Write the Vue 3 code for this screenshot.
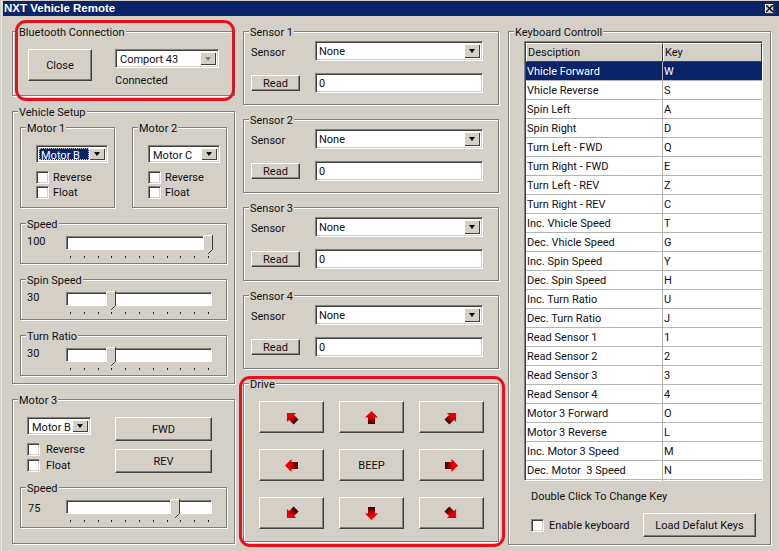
<script setup>
const motors = [
  { title: 'Motor 1', value: 'Motor B', focused: true },
  { title: 'Motor 2', value: 'Motor C', focused: false },
]
const sliders = [
  { title: 'Speed', value: 100 },
  { title: 'Spin Speed', value: 30 },
  { title: 'Turn Ratio', value: 30 },
]
const sensors = ['Sensor 1', 'Sensor 2', 'Sensor 3', 'Sensor 4']
const ticks = Array.from({ length: 11 }, (_, i) => i)
const drive = [
  { angle: -45 }, { angle: 0 }, { angle: 45 },
  { angle: -90 }, { label: 'BEEP' }, { angle: 90 },
  { angle: -135 }, { angle: 180 }, { angle: 135 },
]
const keys = [
  ['Vhicle Forward', 'W'], ['Vhicle Reverse', 'S'], ['Spin Left', 'A'], ['Spin Right', 'D'],
  ['Turn Left - FWD', 'Q'], ['Turn Right - FWD', 'E'], ['Turn Left - REV', 'Z'], ['Turn Right - REV', 'C'],
  ['Inc. Vhicle Speed', 'T'], ['Dec. Vhicle Speed', 'G'], ['Inc. Spin Speed', 'Y'], ['Dec. Spin Speed', 'H'],
  ['Inc. Turn Ratio', 'U'], ['Dec. Turn Ratio', 'J'], ['Read Sensor 1', '1'], ['Read Sensor 2', '2'],
  ['Read Sensor 3', '3'], ['Read Sensor 4', '4'], ['Motor 3 Forward', 'O'], ['Motor 3 Reverse', 'L'],
  ['Inc. Motor 3 Speed', 'M'], ['Dec. Motor  3 Speed', 'N'],
]
const thumbLeft = (v) => `${Math.round(v * 1.38 - 1)}px`
</script>

<template>
  <div class="window">
    <header class="titlebar">
      <span>NXT Vehicle Remote</span>
      <span class="close-box">
        <svg width="7" height="7" viewBox="0 0 7 7"><path d="M0 0L7 7M7 0L0 7" stroke="#000" stroke-width="1.3" /></svg>
      </span>
    </header>

    <main class="content">
      <section class="col col-left">
        <div class="group bt">
          <span class="legend">Bluetooth Connection</span>
          <button class="btn close-btn">Close</button>
          <div class="bt-right">
            <div class="combo combo-port">
              <span class="combo-text">Comport 43</span>
              <span class="combo-arrow disabled"><i></i></span>
            </div>
            <span class="status">Connected</span>
          </div>
        </div>

        <div class="group setup">
          <span class="legend">Vehicle Setup</span>
          <div class="motors">
            <div v-for="m in motors" :key="m.title" class="group motor">
              <span class="legend">{{ m.title }}</span>
              <div class="combo combo-motor">
                <span class="combo-text" :class="{ selected: m.focused }">{{ m.value }}</span>
                <span class="combo-arrow"><i></i></span>
              </div>
              <label class="check"><span class="box"></span>Reverse</label>
              <label class="check"><span class="box"></span>Float</label>
            </div>
          </div>
          <div v-for="s in sliders" :key="s.title" class="group slider-group">
            <span class="legend">{{ s.title }}</span>
            <span class="slider-value">{{ s.value }}</span>
            <div class="slider">
              <div class="track"></div>
              <svg class="thumb" :style="{ left: thumbLeft(s.value) }" width="10" height="20" viewBox="0 0 10 20">
                <path d="M.5 .5H9.5V14.5L5 19L.5 14.5Z" fill="#d4d0c8" />
                <path d="M.5 14.5V.5H9" fill="none" stroke="#fff" />
                <path d="M9.5 0V14.5L5 19" fill="none" stroke="#404040" />
              </svg>
              <div class="ticks"><i v-for="t in ticks" :key="t"></i></div>
            </div>
          </div>
        </div>

        <div class="group motor3">
          <span class="legend">Motor 3</span>
          <div class="motor3-top">
            <div class="motor3-left">
              <div class="combo combo-m3">
                <span class="combo-text">Motor B</span>
                <span class="combo-arrow"><i></i></span>
              </div>
              <label class="check m3-check first"><span class="box"></span>Reverse</label>
              <label class="check m3-check"><span class="box"></span>Float</label>
            </div>
            <div class="motor3-buttons">
              <button class="btn">FWD</button>
              <button class="btn">REV</button>
            </div>
          </div>
          <div class="group slider-group m3-slider">
            <span class="legend">Speed</span>
            <span class="slider-value">75</span>
            <div class="slider">
              <div class="track"></div>
              <svg class="thumb" :style="{ left: thumbLeft(76) }" width="10" height="20" viewBox="0 0 10 20">
                <path d="M.5 .5H9.5V14.5L5 19L.5 14.5Z" fill="#d4d0c8" />
                <path d="M.5 14.5V.5H9" fill="none" stroke="#fff" />
                <path d="M9.5 0V14.5L5 19" fill="none" stroke="#404040" />
              </svg>
              <div class="ticks"><i v-for="t in ticks" :key="t"></i></div>
            </div>
          </div>
        </div>
      </section>

      <section class="col col-mid">
        <div v-for="s in sensors" :key="s" class="group sensor">
          <span class="legend">{{ s }}</span>
          <span class="sensor-label">Sensor</span>
          <div class="combo combo-sensor">
            <span class="combo-text">None</span>
            <span class="combo-arrow"><i></i></span>
          </div>
          <button class="btn read-btn">Read</button>
          <div class="textbox">0</div>
        </div>

        <div class="group drive">
          <span class="legend">Drive</span>
          <button v-for="(d, i) in drive" :key="i" class="btn drive-btn">
            <template v-if="d.label">{{ d.label }}</template>
            <svg v-else width="15" height="15" viewBox="0 0 15 15" :style="{ transform: `rotate(${d.angle}deg)` }">
              <defs>
                <linearGradient :id="`grad${i}`" x1="0" y1="0" x2="0" y2="1">
                  <stop offset="0" stop-color="#ff0000" />
                  <stop offset=".5" stop-color="#d40000" />
                  <stop offset="1" stop-color="#3a0000" />
                </linearGradient>
              </defs>
              <path d="M7.5 1L14 7.5H11V14H4V7.5H1Z" :fill="`url(#grad${i})`" />
            </svg>
          </button>
        </div>
      </section>

      <section class="col col-right">
        <div class="group keyboard">
          <span class="legend">Keyboard Controll</span>
          <div class="table">
            <div class="thead">
              <span class="th">Desciption</span>
              <span class="th">Key</span>
            </div>
            <div v-for="(k, i) in keys" :key="k[0]" class="tr" :class="{ active: i === 0 }">
              <span class="td first-td">{{ k[0] }}</span>
              <span class="td">{{ k[1] }}</span>
            </div>
          </div>
          <p class="note">Double Click To Change Key</p>
          <div class="kb-bottom">
            <label class="check kb-check"><span class="box"></span>Enable keyboard</label>
            <button class="btn load-btn">Load Defalut Keys</button>
          </div>
        </div>
      </section>
    </main>

    <div class="marker marker-bt"></div>
    <div class="marker marker-drive"></div>
  </div>
</template>

<style>
html, body { margin: 0; background: #d4d0c8; }
</style>

<style scoped>
* { box-sizing: border-box; }
.window {
  position: relative;
  width: 779px;
  height: 551px;
  overflow: hidden;
  background: linear-gradient(90deg, #d4d0c8 1px, #eceae5 1px, #eceae5 2px, #d4d0c8 2px);
  padding: 1px 0 0 3px;
  font: 11px Roboto, "Liberation Sans", Arial, sans-serif;
  color: #111;
}
.titlebar {
  height: 15px;
  background: #0a246a;
  color: #fff;
  font: 700 11.5px "Liberation Sans", Arial, sans-serif;
  line-height: 15px;
  padding: 0 5px 0 1px;
  display: flex;
  justify-content: space-between;
  align-items: center;
}
.close-box {
  width: 9px;
  height: 10px;
  background: #d4d0c8;
  display: flex;
  align-items: center;
  justify-content: center;
  box-shadow: inset -1px -1px 0 #404040, inset 1px 1px 0 #fff;
}
.content {
  display: flex;
  padding: 15px 0 0 9px;
}
.col { display: flex; flex-direction: column; }
.col-left { width: 223px; gap: 15px; margin-right: 8px; }
.col-mid { width: 256px; gap: 14px; margin-right: 9px; }
.col-right { width: 263px; }

.group {
  position: relative;
  border: 1px solid #808080;
  box-shadow: 1px 1px 0 #fff, inset 1px 1px 0 #fff;
}
.legend {
  position: absolute;
  top: -6px;
  left: 5px;
  padding: 0 1px;
  line-height: 14px;
  background: #d4d0c8;
  white-space: nowrap;
}
.btn {
  font: inherit;
  color: inherit;
  background: #d4d0c8;
  border: 1px solid;
  border-color: #fff #404040 #404040 #fff;
  box-shadow: inset -1px -1px 0 #808080;
  padding: 0;
  display: flex;
  align-items: center;
  justify-content: center;
}
.combo {
  display: flex;
  align-items: center;
  background: #fff;
  border: 1px solid;
  border-color: #808080 #fff #fff #808080;
  box-shadow: inset 1px 1px 0 #404040, inset -1px -1px 0 #d4d0c8;
  padding: 2px;
}
.combo-text { flex: 1; padding-left: 2px; line-height: 16px; align-self: stretch; white-space: nowrap; }
.combo-text.selected { background: #0a246a; color: #fff; outline: 1px dotted #d4d0c8; outline-offset: -1px; }
.combo-arrow {
  width: 16px;
  align-self: stretch;
  background: #d4d0c8;
  box-shadow: inset 1px 1px 0 #fff, inset -1px -1px 0 #404040;
  display: flex;
  align-items: center;
  justify-content: center;
}
.combo-arrow i {
  width: 0;
  height: 0;
  border: 3.5px solid transparent;
  border-top: 4px solid #000;
  border-bottom: 0;
}
.combo-arrow.disabled i { border-top-color: #808080; }
.check { display: flex; align-items: center; height: 15px; }
.box {
  width: 13px;
  height: 13px;
  margin-right: 5px;
  background: #fff;
  border: 1px solid;
  border-color: #808080 #fff #fff #808080;
  box-shadow: inset 1px 1px 0 #404040, inset -1px -1px 0 #d4d0c8;
}

.bt { height: 65px; display: flex; padding: 17px 0 0 15px; }
.close-btn { width: 64px; height: 32px; margin-right: 23px; }
.bt-right { display: flex; flex-direction: column; }
.combo-port { width: 104px; height: 19px; }
.status { margin-top: 6px; }

.setup { height: 273px; padding: 15px 7px 0 7px; display: flex; flex-direction: column; gap: 15px; }
.motors { display: flex; gap: 17px; }
.motor { width: 95px; height: 81px; padding: 17px 0 0 15px; }
.combo-motor { width: 72px; height: 18px; margin-bottom: 7px; }
.motor .check { height: 15px; }
.motor .box { margin-right: 4px; }

.slider-group { height: 41px; display: flex; padding: 11px 0 0 6px; width: 207px; }
.slider-value { width: 39px; line-height: 14px; }
.slider { position: relative; width: 146px; margin-top: 1px; }
.track {
  height: 14px;
  background: #fff;
  border: 1px solid;
  border-color: #808080 #fff #fff #808080;
  box-shadow: inset 1px 1px 0 #404040;
}
.thumb { position: absolute; top: -1px; }
.ticks { display: flex; justify-content: space-between; padding: 6px 3px 0 4px; }
.ticks i { width: 1px; height: 2px; background: #222; }

.motor3 { height: 145px; padding: 17px 0 0 7px; }
.motor3-top { display: flex; height: 56px; margin-bottom: 14px; }
.motor3-left { width: 95px; padding-left: 7px; }
.combo-m3 { width: 64px; height: 18px; margin-bottom: 6px; }
.m3-check { height: 16px; }
.m3-check .box { margin-right: 6px; }
.motor3-buttons { width: 97px; display: flex; flex-direction: column; gap: 8px; }
.motor3-buttons .btn { height: 24px; }
.m3-slider .slider-value { line-height: 20px; padding-left: 1px; }

.sensor {
  height: 74px;
  display: grid;
  grid-template-columns: 64px 168px;
  grid-template-rows: 20px 20px;
  row-gap: 12px;
  padding: 9px 0 0 7px;
  align-items: center;
}
.sensor-label { line-height: 14px; padding-top: 3px; }
.combo-sensor { height: 20px; }
.combo-sensor .combo-text { padding-left: 1px; }
.read-btn { width: 49px; height: 16px; }
.textbox {
  height: 20px;
  background: #fff;
  border: 1px solid;
  border-color: #808080 #fff #fff #808080;
  box-shadow: inset 1px 1px 0 #404040, inset -1px -1px 0 #d4d0c8;
  padding-left: 3px;
  line-height: 20px;
}
.drive {
  height: 159px;
  display: grid;
  grid-template-columns: repeat(3, 65px);
  grid-auto-rows: 32px;
  column-gap: 15px;
  row-gap: 16px;
  padding: 17px 0 0 15px;
}
.drive-btn svg { display: block; }

.keyboard { height: 514px; padding: 9px 0 0 15px; }
.table {
  width: 239px;
  height: 440px;
  background: #fff;
  border: 1px solid;
  border-color: #808080 #fff #fff #808080;
  box-shadow: inset 1px 1px 0 #404040;
  padding: 1px 0 0 1px;
}
.thead, .tr { display: grid; grid-template-columns: 137px 1fr; }
.th {
  height: 19px;
  line-height: 17px;
  padding-left: 1px;
  background: #d4d0c8;
  border: 1px solid;
  border-color: #fff #404040 #404040 #fff;
}
.tr { height: 19px; line-height: 20px; border-bottom: 1px solid #b4b4b4; }
.td { padding-left: 1px; white-space: pre; }
.td.first-td { border-right: 1px solid #b4b4b4; }
.tr.active { background: #0a246a; color: #fff; }
.note { margin: 9px 0 0 7px; line-height: 14px; }
.kb-bottom { display: flex; align-items: center; margin: 9px 0 0 7px; }
.kb-check { width: 112px; }
.load-btn { width: 113px; height: 24px; }

.marker {
  position: absolute;
  border: 3px solid #e8101a;
  border-radius: 11px;
  pointer-events: none;
}
.marker-bt { left: 15px; top: 20px; width: 220px; height: 81px; }
.marker-drive { left: 239px; top: 376px; width: 266px; height: 171px; }
</style>
